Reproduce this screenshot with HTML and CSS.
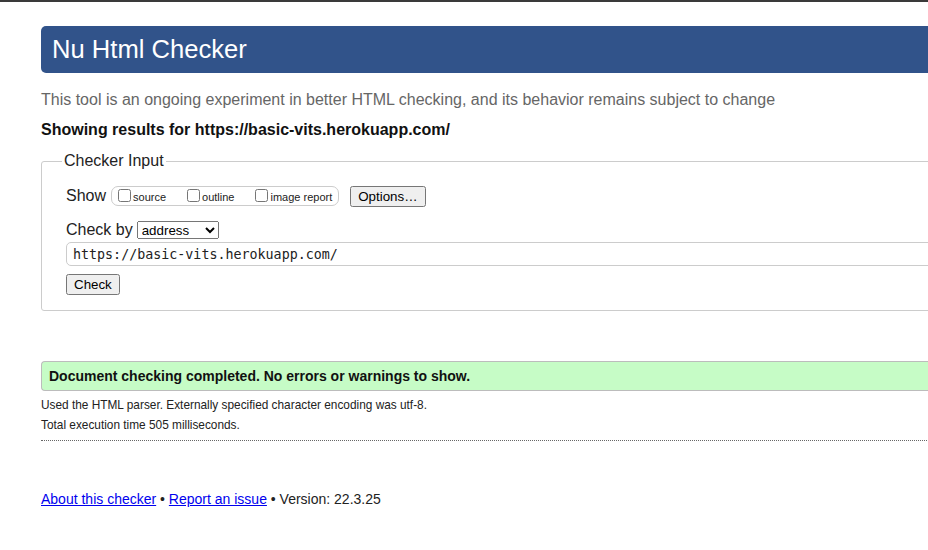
FILE: index.html
```html
<!DOCTYPE html>
<html lang="en">
<head>
<meta charset="utf-8">
<title>Nu Html Checker</title>
<link rel="stylesheet" href="styles.css">
</head>
<body>
<div class="page">
  <h1 class="title">Nu Html Checker</h1>
  <p class="tagline">This tool is an ongoing experiment in better HTML checking, and its behavior remains subject to change</p>
  <p class="results-for">Showing results for https://basic-vits.herokuapp.com/</p>
  <form class="checker-form">
    <fieldset class="checker-input">
      <legend class="legend">Checker Input</legend>
      <div class="show-row">
        <span class="row-label">Show</span>
        <span class="opts">
          <label class="opt"><input type="checkbox" class="cb">source</label>
          <label class="opt"><input type="checkbox" class="cb">outline</label>
          <label class="opt"><input type="checkbox" class="cb">image report</label>
        </span>
        <button type="button" class="btn options-btn">Options…</button>
      </div>
      <div class="checkby-row">
        <span class="row-label">Check by</span>
        <select class="sel">
          <option>address</option>
          <option>file upload</option>
          <option>text input</option>
        </select>
      </div>
      <input class="url" type="text" value="https://basic-vits.herokuapp.com/">
      <div class="submit-row"><button type="button" class="btn">Check</button></div>
    </fieldset>
  </form>
  <div class="success">Document checking completed. No errors or warnings to show.</div>
  <p class="details">Used the HTML parser. Externally specified character encoding was utf-8.</p>
  <p class="details">Total execution time 505 milliseconds.</p>
  <div class="separator"></div>
  <p class="footer"><a href="#">About this checker</a> • <a href="#">Report an issue</a> • Version: 22.3.25</p>
</div>
</body>
</html>
```
FILE: styles.css
```css
html {
  overflow: hidden;
  background: #fff;
}
body {
  margin: 0;
  border-top: 2px solid #3a3a3a;
  font-family: "Liberation Sans", Arial, Helvetica, sans-serif;
  color: #222;
}
.page {
  width: 1100px;
  padding-left: 41px;
}
.title {
  margin: 24px 0 0 0;
  padding: 9px 11px;
  background: #31538a;
  color: #fff;
  font-size: 25.6px;
  line-height: 29px;
  font-weight: normal;
  border-radius: 5px 0 0 5px;
}
.tagline {
  margin: 18px 0 0 0;
  font-size: 16px;
  line-height: 18px;
  color: #666;
}
.results-for {
  margin: 12px 0 0 0;
  font-size: 16px;
  line-height: 18px;
  font-weight: bold;
  color: #111;
}
.checker-form {
  margin: 13px 0 0 0;
}
.checker-input {
  margin: 0;
  border: 1px solid #ccc;
  border-radius: 3px;
  padding: 16px 0 16px 24px;
  min-width: 0;
}
.legend {
  margin-left: -4px;
  padding: 0 2px;
  font-size: 16px;
  line-height: 18px;
}
.show-row {
  display: flex;
  align-items: center;
  height: 20px;
}
.row-label {
  font-size: 16px;
  line-height: 18px;
}
.opts {
  display: flex;
  align-items: center;
  gap: 21px;
  height: 18px;
  margin-left: 5px;
  padding: 0 6px;
  border: 1px solid #ccc;
  border-radius: 7px;
}
.opt {
  display: flex;
  align-items: center;
  gap: 2px;
  padding-top: 3px;
  font-size: 11px;
  line-height: 13px;
}
.cb {
  width: 13px;
  height: 13px;
  margin: -4px 0 0 0;
}
.btn {
  font-family: "Liberation Sans", Arial, sans-serif;
  font-size: 13.333px;
}
.options-btn {
  margin-left: 11px;
}
.checkby-row {
  display: flex;
  align-items: center;
  margin-top: 15px;
  height: 18px;
}
.sel {
  margin-left: 4px;
  width: 82px;
  height: 18px;
  font-family: "Liberation Sans", Arial, sans-serif;
  font-size: 13.333px;
}
.url {
  display: block;
  box-sizing: border-box;
  width: 1100px;
  height: 24px;
  margin-top: 3px;
  padding: 0 6px;
  border: 1px solid #ccc;
  border-radius: 5px;
  font-family: "DejaVu Sans Mono", "Liberation Mono", monospace;
  font-size: 13.333px;
  color: #222;
}
.submit-row {
  margin-top: 8px;
  height: 20px;
}
.success {
  margin-top: 50px;
  padding: 6px 7px 6px;
  background: #c6fcc6;
  border: 1px solid #bcbcbc;
  border-right: 0;
  border-radius: 4px 0 0 4px;
  font-size: 14px;
  line-height: 16px;
  font-weight: bold;
  color: #111;
}
.details {
  margin: 0;
  font-size: 11.85px;
  line-height: 20px;
}
.success + .details {
  margin-top: 4px;
}
.separator {
  margin-top: 5px;
  border-top: 1px dotted #666;
}
.footer {
  margin: 50px 0 0 0;
  font-size: 14px;
  line-height: 16px;
}
.footer a {
  color: #0000ee;
}
```
